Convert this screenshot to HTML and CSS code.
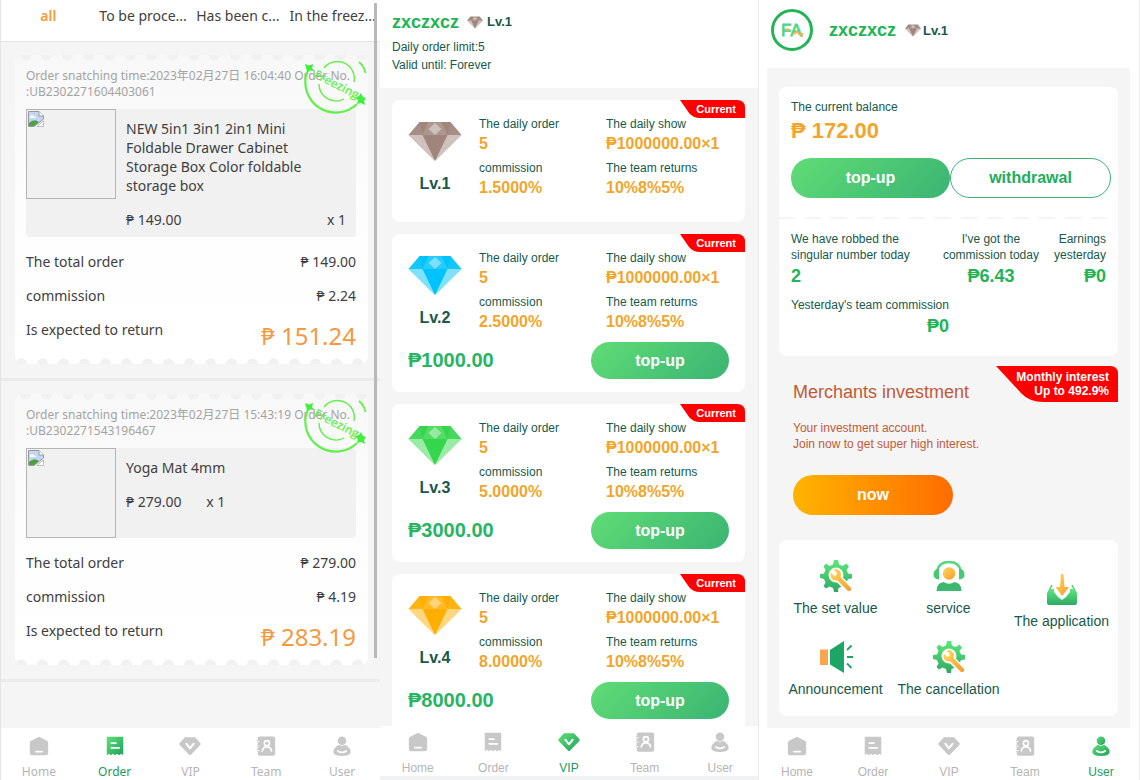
FILE: index.html
```html
<!DOCTYPE html>
<html lang="en">
<head>
    <meta charset="UTF-8">
    <meta name="viewport" content="width=device-width, initial-scale=1.0">
    <title>Orders, VIP and User</title>
    <link rel="stylesheet" href="styles.css">
</head>
<body>
    <!-- Shared icons -->
    <svg class="defs" width="0" height="0" aria-hidden="true">
        <defs>
            <linearGradient id="green" x1="0" y1="0" x2="1" y2="1">
                <stop offset="0" stop-color="#5fe077"/>
                <stop offset="1" stop-color="#1fa05c"/>
            </linearGradient>
            <linearGradient id="green-down" x1="0" y1="0" x2="0" y2="1">
                <stop offset="0" stop-color="#5be87a"/>
                <stop offset="1" stop-color="#2fa866"/>
            </linearGradient>
            <linearGradient id="gold" x1="0" y1="0" x2="1" y2="1">
                <stop offset="0" stop-color="#ffd95e"/>
                <stop offset="1" stop-color="#f79a2c"/>
            </linearGradient>
        </defs>
        <symbol id="i-home" viewBox="0 0 24 24">
            <path d="M12 2 21 6.500Q22 7 22 8.500V19.500Q22 22 19.500 22H4.500Q2 22 2 19.500V8.500Q2 7 3 6.500Z"/>
            <path d="M8.500 18.200h7" stroke="#fff" stroke-width="1.800" stroke-linecap="round"/>
        </symbol>
        <symbol id="i-order" viewBox="0 0 24 24">
            <path d="M3 2H21V22L19 20.500 16.500 22 14.300 20.500 12 22 9.700 20.500 7.500 22 5 20.500 3 22Z"/>
            <path d="M8 8.800h5M8 14h8.500" stroke="#fff" stroke-width="2" stroke-linecap="round"/>
        </symbol>
        <symbol id="i-vip" viewBox="0 0 24 24">
            <path d="M6.500 2.500h11L23.500 9Q24 10 23.200 10.800L13 21.500Q12 22.500 11 21.500L.8 10.800Q0 10 .5 9Z"/>
            <path d="M8 9.500l4 5 4-5" fill="none" stroke="#fff" stroke-width="2.200" stroke-linecap="round" stroke-linejoin="round"/>
        </symbol>
        <symbol id="i-team" viewBox="0 0 24 24">
            <path d="M5 1.500H20Q22 1.500 22 3.500V20.500Q22 22.500 20 22.500H5Q3 22.500 3 20.500V18H2V15.500H3V13H2V10.500H3V8H2V5.500H3V3.500Q3 1.500 5 1.500Z"/>
            <circle cx="13" cy="9" r="2.800" fill="none" stroke="#fff" stroke-width="1.800"/>
            <path d="M8 17.500q.5-4.500 5-4.500t5 4.500" fill="none" stroke="#fff" stroke-width="1.800" stroke-linecap="round"/>
            <path d="M1 7h4M1 12h4M1 17h4" stroke="#fff" stroke-width="1"/>
        </symbol>
        <symbol id="i-user" viewBox="0 0 24 24">
            <circle cx="12" cy="6.200" r="4.700"/>
            <path d="M8.500 10.500q3.500 2.500 7 0Q21.500 14 21.500 18.500 21 22.800 12 22.800T2.500 18.500Q2.500 14 8.500 10.500Z"/>
            <path d="M7.500 17.500q4.500 3 9 0" fill="none" stroke="#fff" stroke-width="2" stroke-linecap="round"/>
        </symbol>
        <symbol id="i-diamond" viewBox="0 0 53 39">
            <path d="M11 0H42L53 13 26.500 39 0 13Z" fill="currentColor"/>
            <path d="M0 13H14L26.500 39ZM53 13H39L26.500 39Z" fill="#fff" opacity=".5"/>
            <path d="M11 0 0 13H14ZM42 0 53 13H39Z" fill="#fff" opacity=".08"/>
            <path d="M20 0H33L39 13H14Z" fill="#fff" opacity=".15"/>
            <path d="M26.500 1 33 7 26.500 13 20 7Z" fill="#fff" opacity=".4"/>
        </symbol>
        <symbol id="i-gear" viewBox="0 0 32 32">
            <path d="M14 0h4l1 4.500 3.500 1.500L26.500 3.500 29 6.500 26.500 10 28 13.500 32 14v4.500L28 19 26.500 22.500 28.500 26 25.500 28.500 22 26.500 18.500 28 18 32H14L13 28 9.500 26.500 6 28.500 3.500 26 5.500 22.500 4 19 0 18V14L4 13.500 5.500 10 3.500 6.500 6 3.500 9.500 6 13 4.500Z" fill="url(#green-down)"/>
            <circle cx="16" cy="15" r="7.500" fill="#fff"/>
            <path d="M18 18 28 28" stroke="#fff" stroke-width="7.500" stroke-linecap="round"/>
            <path d="M13 9.500Q19 8 21 13L20.500 17 31 28Q32 31.500 28 31L17.500 20.500Q12 21 10.500 16.500V12.500L14.500 16Q17.500 15 16.500 12.500Z" fill="url(#gold)"/>
        </symbol>
        <symbol id="i-broken" viewBox="0 0 16 16">
            <path d="M.5.5H11L15.500 5V8L6 15.500H.5Z" fill="#c5d5f5" stroke="#9a9a9a"/>
            <path d="M11 .5V5h4.500" fill="#fff" stroke="#9a9a9a"/>
            <path d="M2 5.500q2-2.500 4 0 2-.5 2 1.500H2Z" fill="#fff"/>
            <path d="M1 15V12q5-5 10-1L6 15Z" fill="#4f9f43"/>
            <path d="M15.500 10V15.500H9Z" fill="#fff" stroke="#9a9a9a" stroke-width=".6"/>
        </symbol>
        <symbol id="i-stamp" viewBox="0 0 62 54" overflow="visible">
            <g fill="none" stroke="#62f04a">
                <path d="M3 10A30.500 30.500 0 0 0 53 42" stroke-width="2.200"/>
                <path d="M15 22A17 17 0 0 0 40 37M20 6A17 17 0 0 1 50 20" stroke-width="1.400"/>
                <path d="M55 0Q60 4 61.500 11" stroke-width="1.800"/>
            </g>
            <g fill="#3df03a">
                <path d="M1 2 5 3.500 9 2 8 6 10 9 6 8.500 3 11 2.500 7Z"/>
                <path d="M57 31 59 35 62 36 60 39 61 43 57 41 53 42 54 38 51 35 55 34Z"/>
                <text x="9" y="15" transform="rotate(27 9 15)" font-family="Open Sans, sans-serif" font-size="12" font-weight="600" fill="#62f04a">Freezing</text>
            </g>
        </symbol>
    </svg>

    <main class="screens">
        <!-- Orders -->
        <section class="screen orders">
            <div class="tabs">
                <button class="tab active">all</button>
                <button class="tab">To be proce...</button>
                <button class="tab">Has been c...</button>
                <button class="tab">In the freez...</button>
            </div>
            <div class="content">
                <div class="order-item">
                    <article class="ticket">
                        <p class="order-info">Order snatching time:2023年02月27日 16:04:40 Order No.<br>:UB2302271604403061</p>
                        <svg class="stamp" role="img" aria-label="Freezing"><use href="#i-stamp"/></svg>
                        <div class="product">
                            <div class="thumb"><svg><use href="#i-broken"/></svg></div>
                            <div class="product-info long">
                                <h3>NEW 5in1 3in1 2in1 Mini<br>Foldable Drawer Cabinet<br>Storage Box Color foldable<br>storage box</h3>
                                <p class="row"><span>₱ 149.00</span><span>x 1</span></p>
                            </div>
                        </div>
                        <p class="row"><span>The total order</span><span>₱ 149.00</span></p>
                        <p class="row"><span>commission</span><span>₱ 2.24</span></p>
                        <p class="row"><span>Is expected to return</span><span class="total">₱ 151.24</span></p>
                    </article>
                </div>
                <div class="order-item">
                    <article class="ticket">
                        <p class="order-info">Order snatching time:2023年02月27日 15:43:19 Order No.<br>:UB2302271543196467</p>
                        <svg class="stamp" role="img" aria-label="Freezing"><use href="#i-stamp"/></svg>
                        <div class="product">
                            <div class="thumb"><svg><use href="#i-broken"/></svg></div>
                            <div class="product-info">
                                <h3>Yoga Mat 4mm</h3>
                                <p class="row"><span>₱ 279.00</span><span>x 1</span></p>
                            </div>
                        </div>
                        <p class="row"><span>The total order</span><span>₱ 279.00</span></p>
                        <p class="row"><span>commission</span><span>₱ 4.19</span></p>
                        <p class="row"><span>Is expected to return</span><span class="total">₱ 283.19</span></p>
                    </article>
                </div>
            </div>
            <div class="scrollbar"></div>
            <nav class="navbar">
                <a href="#home"><svg><use href="#i-home"/></svg>Home</a>
                <a href="#order" class="active"><svg><use href="#i-order"/></svg>Order</a>
                <a href="#vip"><svg><use href="#i-vip"/></svg>VIP</a>
                <a href="#team"><svg><use href="#i-team"/></svg>Team</a>
                <a href="#user"><svg><use href="#i-user"/></svg>User</a>
            </nav>
        </section>

        <!-- VIP -->
        <section class="screen vip">
            <header class="vip-header">
                <div class="account">
                    <strong class="name">zxczxcz</strong>
                    <svg class="gem bronze"><use href="#i-diamond"/></svg>
                    <span class="level">Lv.1</span>
                </div>
                <p>Daily order limit:5</p>
                <p>Valid until: Forever</p>
            </header>
            <div class="content">
                <article class="vip-card">
                    <span class="badge">Current</span>
                    <div class="vip-body">
                        <div class="rank"><svg class="bronze"><use href="#i-diamond"/></svg>Lv.1</div>
                        <dl>
                            <div><dt>The daily order</dt><dd>5</dd></div>
                            <div><dt>The daily show</dt><dd>₱1000000.00×1</dd></div>
                            <div><dt>commission</dt><dd>1.5000%</dd></div>
                            <div><dt>The team returns</dt><dd>10%8%5%</dd></div>
                        </dl>
                    </div>
                </article>
                <article class="vip-card">
                    <span class="badge">Current</span>
                    <div class="vip-body">
                        <div class="rank"><svg class="blue"><use href="#i-diamond"/></svg>Lv.2</div>
                        <dl>
                            <div><dt>The daily order</dt><dd>5</dd></div>
                            <div><dt>The daily show</dt><dd>₱1000000.00×1</dd></div>
                            <div><dt>commission</dt><dd>2.5000%</dd></div>
                            <div><dt>The team returns</dt><dd>10%8%5%</dd></div>
                        </dl>
                    </div>
                    <div class="vip-buy"><span>₱1000.00</span><button class="btn">top-up</button></div>
                </article>
                <article class="vip-card">
                    <span class="badge">Current</span>
                    <div class="vip-body">
                        <div class="rank"><svg class="emerald"><use href="#i-diamond"/></svg>Lv.3</div>
                        <dl>
                            <div><dt>The daily order</dt><dd>5</dd></div>
                            <div><dt>The daily show</dt><dd>₱1000000.00×1</dd></div>
                            <div><dt>commission</dt><dd>5.0000%</dd></div>
                            <div><dt>The team returns</dt><dd>10%8%5%</dd></div>
                        </dl>
                    </div>
                    <div class="vip-buy"><span>₱3000.00</span><button class="btn">top-up</button></div>
                </article>
                <article class="vip-card">
                    <span class="badge">Current</span>
                    <div class="vip-body">
                        <div class="rank"><svg class="amber"><use href="#i-diamond"/></svg>Lv.4</div>
                        <dl>
                            <div><dt>The daily order</dt><dd>5</dd></div>
                            <div><dt>The daily show</dt><dd>₱1000000.00×1</dd></div>
                            <div><dt>commission</dt><dd>8.0000%</dd></div>
                            <div><dt>The team returns</dt><dd>10%8%5%</dd></div>
                        </dl>
                    </div>
                    <div class="vip-buy"><span>₱8000.00</span><button class="btn">top-up</button></div>
                </article>
            </div>
            <nav class="navbar">
                <a href="#home"><svg><use href="#i-home"/></svg>Home</a>
                <a href="#order"><svg><use href="#i-order"/></svg>Order</a>
                <a href="#vip" class="active"><svg><use href="#i-vip"/></svg>VIP</a>
                <a href="#team"><svg><use href="#i-team"/></svg>Team</a>
                <a href="#user"><svg><use href="#i-user"/></svg>User</a>
            </nav>
        </section>

        <!-- User -->
        <section class="screen user">
            <header class="user-header">
                <svg class="avatar" viewBox="0 0 42 42">
                    <circle cx="21" cy="21" r="19.500" fill="#fff" stroke="#22b455" stroke-width="3"/>
                    <text x="10" y="27" font-family="Liberation Sans, sans-serif" font-size="17" fill="#4fd58a" stroke="#4fd58a" stroke-width=".8">FA</text>
                    <path d="M14 20.500h4M23 25l3-2.500 2 2.500h3v3" fill="none" stroke="#f7b14a" stroke-width="1.800"/>
                </svg>
                <strong class="name">zxczxcz</strong>
                <svg class="gem bronze"><use href="#i-diamond"/></svg>
                <span class="level">Lv.1</span>
            </header>
            <div class="content">
                <section class="panel wallet">
                    <p>The current balance</p>
                    <strong class="balance">₱ 172.00</strong>
                    <div class="actions">
                        <button class="btn">top-up</button>
                        <button class="btn outline">withdrawal</button>
                    </div>
                    <hr>
                    <div class="stats">
                        <div>We have robbed the<br>singular number today<b>2</b></div>
                        <div>I've got the<br>commission today<b>₱6.43</b></div>
                        <div>Earnings<br>yesterday<b>₱0</b></div>
                        <div>Yesterday's team commission<b>₱0</b></div>
                    </div>
                </section>
                <section class="invest">
                    <span class="rate">Monthly interest<br>Up to 492.9%</span>
                    <h2>Merchants investment</h2>
                    <p>Your investment account.<br>Join now to get super high interest.</p>
                    <button class="btn orange">now</button>
                </section>
                <section class="panel menu">
                    <a href="#settings"><svg><use href="#i-gear"/></svg>The set value</a>
                    <a href="#service">
                        <svg viewBox="0 0 32 32">
                            <path d="M4 11Q6 2 16 2T28 11" fill="none" stroke="#52da7a" stroke-width="2.500"/>
                            <path d="M6 8.500v11Q.5 19 .5 14.500 .5 9.500 6 8.500ZM26 8.500v11Q31.500 19 31.500 14.500 31.500 9.500 26 8.500Z" fill="#45c872"/>
                            <circle cx="16" cy="13.500" r="6.200" fill="url(#gold)"/>
                            <path d="M3.500 31Q3.500 23 10.500 22 16 25.500 21.500 22 28.500 23 28.500 31Z" fill="#3cb96e"/>
                        </svg>service</a>
                    <a href="#application">
                        <svg viewBox="0 0 32 32">
                            <path d="M1 21 5 16H8V19L12 24 16 27 20 24 24 19V16H27L31 21V30Q31 32 29 32H3Q1 32 1 30Z" fill="url(#green-down)"/>
                            <path d="M6 12 1.500 21M26 12 30.500 21" stroke="#52cf7a" stroke-width="1.600"/>
                            <path d="M15 1h2.500L18.500 14H23L16.200 23 9.500 14H14Z" fill="url(#gold)"/>
                        </svg>The application</a>
                    <a href="#announcement">
                        <svg class="wide" viewBox="0 0 34 32">
                            <path d="M1 8.500H9V24H1Z" fill="#f9a54c"/>
                            <path d="M11 9 25 0V32L11 23.500Z" fill="#1ba665"/>
                            <path d="M28 9l4.500-4.500M28 16h6M28 22.500l4.500 4.500" stroke="#1ba665" stroke-width="1.800"/>
                        </svg>Announcement</a>
                    <a href="#cancellation"><svg><use href="#i-gear"/></svg>The cancellation</a>
                </section>
            </div>
            <nav class="navbar">
                <a href="#home"><svg><use href="#i-home"/></svg>Home</a>
                <a href="#order"><svg><use href="#i-order"/></svg>Order</a>
                <a href="#vip"><svg><use href="#i-vip"/></svg>VIP</a>
                <a href="#team"><svg><use href="#i-team"/></svg>Team</a>
                <a href="#user" class="active"><svg><use href="#i-user"/></svg>User</a>
            </nav>
        </section>
    </main>
</body>
</html>
```

FILE: styles.css
```css
* {
    box-sizing: border-box;
}

body {
    margin: 0;
    font-family: "Liberation Sans", Arial, sans-serif;
    font-size: 12px;
    color: #17594a;
    background-color: #fff;
}

p, h2, h3, dl, dd {
    margin: 0;
}

button {
    font-family: inherit;
    border: none;
    padding: 0;
    cursor: pointer;
}

a {
    color: inherit;
    text-decoration: none;
}

.defs {
    position: absolute;
}

.screens {
    display: grid;
    grid-template-columns: 380fr 378fr 382fr;
    height: 100vh;
    overflow: hidden;
}

.screen {
    display: flex;
    flex-direction: column;
    position: relative;
    min-width: 0;
    min-height: 0;
    background-color: #fff;
}

.content {
    flex: 1;
    min-height: 0;
    overflow: hidden;
    background-color: #f5f5f5;
}

/* Bottom navigation */
.navbar {
    flex: none;
    display: flex;
    height: 52px;
    padding-top: 7px;
    overflow: hidden;
    background-color: #fff;
}

.navbar a {
    flex: 1;
    display: flex;
    flex-direction: column;
    align-items: center;
    gap: 7px;
    color: #b5b5b5;
    font-size: 12px;
    line-height: 16px;
}

.navbar svg {
    width: 24px;
    height: 24px;
    fill: #c8c8c8;
}

.navbar a.active {
    color: #1c9a5b;
}

.navbar .active svg {
    fill: url(#green);
}

/* Buttons */
.btn {
    border-radius: 20px;
    background: linear-gradient(135deg, #60dc76, #3ab473);
    color: #fff;
    font-size: 16px;
    font-weight: bold;
}

.btn.outline {
    background: #fff;
    border: 1px solid #3ab473;
    color: #22ad5c;
}

.btn.orange {
    background: linear-gradient(90deg, #ffb400, #ff6c00);
}

/* Diamonds */
.bronze { color: #9f857c; }
.blue { color: #00c3fb; }
.emerald { color: #35d64c; }
.amber { color: #ffae00; }

.name {
    font-size: 18px;
    color: #22b455;
}

.gem {
    width: 16px;
    height: 13px;
}

.level {
    font-size: 13px;
    font-weight: bold;
}

/* Orders */
.orders {
    font-family: "Noto Sans", "Noto Sans CJK SC", sans-serif;
    font-size: 14px;
    color: #404040;
    border-left: 1px solid #e4e4e4;
}

.tabs {
    display: flex;
    height: 42px;
    padding-bottom: 10px;
    border-bottom: 1px solid #e4e4e4;
}

.tab {
    flex: 1;
    min-width: 0;
    background: none;
    font-size: 14px;
    line-height: 20px;
    color: #404040;
    white-space: nowrap;
}

.tab.active {
    color: #f39a3f;
    font-weight: 600;
}

.order-item {
    padding: 13px 12px 14px 14px;
    border-bottom: 3px solid #ebebeb;
}

.ticket {
    position: relative;
    padding: 13px 12px 17px 11px;
    border-radius: 8px;
    background: linear-gradient(#f8f8f8, #fdfdfd 50%, #fff);
}

.ticket::before,
.ticket::after {
    content: "";
    position: absolute;
    left: 0;
    right: 0;
    height: 6px;
    background: radial-gradient(circle at 50% 0, #f1f1f1 5px, transparent 6px) repeat-x 0 0 / 21px 6px;
}

.ticket::before {
    top: 0;
}

.ticket::after {
    bottom: 0;
    transform: rotate(180deg);
}

.order-info {
    font-size: 12px;
    line-height: 16px;
    color: #a3a3a3;
    white-space: nowrap;
}

.stamp {
    position: absolute;
    top: 7px;
    right: 2px;
    width: 62px;
    height: 54px;
    overflow: visible;
}

.product {
    display: flex;
    align-items: flex-start;
    gap: 10px;
    margin: 9px 0 8px;
    padding-right: 10px;
    border-radius: 4px;
    background-color: #f1f1f1;
}

.thumb {
    flex: none;
    width: 90px;
    height: 90px;
    padding: 1px;
    border: 1px solid #b4b4b4;
}

.thumb svg {
    width: 16px;
    height: 16px;
}

.product-info {
    padding-top: 10px;
}

.product-info.long {
    flex: 1;
}

.product-info h3 {
    margin-bottom: 8px;
    font-size: 14px;
    font-weight: normal;
    line-height: 19px;
}

.row {
    display: flex;
    justify-content: space-between;
    height: 34px;
    line-height: 34px;
}

.total {
    font-size: 24px;
    line-height: 46px;
    color: #f39a3f;
}

.scrollbar {
    position: absolute;
    top: 3px;
    right: 3px;
    width: 3px;
    height: 84%;
    background-color: #b9b9b9;
}

/* VIP */
.vip {
    border-bottom: 4px solid #f1f2f4;
}

.vip .navbar {
    height: 50px;
    padding-top: 5px;
}

.vip-header {
    height: 88px;
    padding: 12px;
    line-height: 18px;
}

.account {
    display: flex;
    align-items: center;
    height: 20px;
    margin-bottom: 6px;
}

.account .gem {
    margin: 0 4px 0 8px;
}

.vip .content {
    display: flex;
    flex-direction: column;
    gap: 12px;
    padding: 12px 13px 0 12px;
}

.vip-card {
    flex: none;
    position: relative;
    min-height: 122px;
    padding: 16px 16px 13px;
    border-radius: 8px;
    background-color: #fff;
}

.badge,
.rate {
    position: absolute;
    top: 0;
    right: 0;
    background-color: #f00;
    color: #fff;
    font-weight: bold;
    text-align: right;
}

.badge {
    width: 65px;
    height: 18px;
    padding-right: 9px;
    font-size: 11px;
    line-height: 18px;
    clip-path: path("M0 0H57Q65 0 65 8V18H20Q13 18 9 13Z");
}

.vip-body {
    display: flex;
    gap: 17px;
}

.rank {
    display: flex;
    flex-direction: column;
    align-items: center;
    gap: 14px;
    padding-top: 6px;
    font-size: 16px;
    font-weight: bold;
}

.rank svg {
    width: 54px;
    height: 39px;
}

.vip-card dl {
    flex: 1;
    display: grid;
    grid-template-columns: 127fr 123fr;
    gap: 4px 0;
}

.vip-card dt {
    line-height: 16px;
}

.vip-card dd {
    font-size: 16px;
    font-weight: bold;
    line-height: 24px;
    color: #f2a52b;
}

.vip-buy {
    display: flex;
    justify-content: space-between;
    align-items: center;
    margin-top: 8px;
    font-size: 20px;
    font-weight: bold;
    color: #28b463;
}

.vip-buy .btn {
    width: 138px;
    height: 37px;
}

/* User */
.user {
    border-left: 1px solid #e9e9e9;
    border-right: 1px solid #e9e9e9;
    padding: 0 9px 0 8px;
}

.user .navbar {
    margin: 0 -9px 0 -8px;
}

.user-header {
    display: flex;
    align-items: center;
    height: 68px;
    padding: 0 4px 8px;
}

.avatar {
    width: 42px;
    height: 42px;
    margin-right: 16px;
}

.user-header .gem {
    margin: 0 2px 0 9px;
}

.user .content {
    padding: 19px 12px 0;
}

.panel {
    border-radius: 8px;
    background-color: #fff;
}

.wallet {
    height: 269px;
    padding: 12px 7px 0 12px;
    line-height: 16px;
}

.balance {
    display: block;
    margin-bottom: 12px;
    font-size: 22px;
    line-height: 31px;
    color: #f2a52b;
}

.actions {
    display: flex;
}

.actions .btn {
    flex: 1;
    height: 40px;
}

.wallet hr {
    height: 2px;
    margin: 19px 0 12px -12px;
    border: none;
    background: repeating-linear-gradient(90deg, #f5f5f5 0 16px, #fff 16px 26px);
}

.stats {
    display: flex;
    flex-wrap: wrap;
    justify-content: space-between;
    gap: 7px 15px;
    padding-right: 5px;
}

.stats b {
    display: block;
    font-size: 18px;
    line-height: 27px;
    color: #22b455;
}

.stats div:nth-child(2) {
    margin-left: auto;
    text-align: center;
}

.stats div:nth-child(n+3) {
    text-align: right;
}

.invest {
    position: relative;
    margin: 10px 0 25px;
    padding: 15px 14px 0;
    line-height: 16px;
    color: #bf5b35;
}

.invest h2 {
    margin-bottom: 16px;
    font-size: 18px;
    font-weight: normal;
    line-height: 23px;
}

.invest .btn {
    width: 160px;
    height: 40px;
    margin-top: 23px;
}

.rate {
    width: 122px;
    height: 36px;
    padding: 4px 9px;
    line-height: 14px;
    clip-path: path("M0 0H114Q122 0 122 8V36H48Q33 36 25 27Z");
}

.menu {
    display: grid;
    grid-template-columns: 1fr 1fr 1fr;
    grid-template-rows: 81px auto;
    padding: 20px 0 19px;
    font-size: 14px;
    line-height: 16px;
}

.menu a {
    display: flex;
    flex-direction: column;
    align-items: center;
    gap: 8px;
    white-space: nowrap;
}

.menu a:nth-child(3) {
    align-self: center;
}

.menu svg {
    width: 32px;
    height: 32px;
}

.menu .wide {
    width: 34px;
}
```
